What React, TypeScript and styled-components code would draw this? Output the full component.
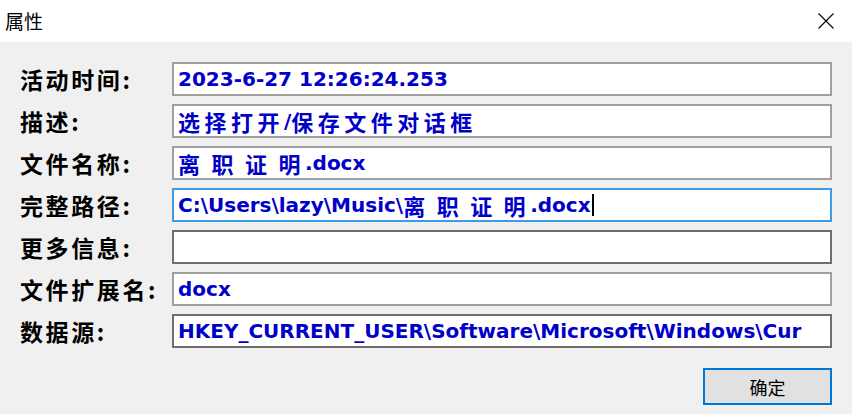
import React from 'react';
import styled, { createGlobalStyle } from 'styled-components';

const GlobalStyle = createGlobalStyle`
  html, body {
    margin: 0;
    padding: 0;
    background: #f0f0f0;
  }
  * {
    box-sizing: border-box;
  }
`;

const Dialog = styled.div`
  width: 852px;
  height: 414px;
  display: flex;
  flex-direction: column;
  background: #f0f0f0;
  font-family: "Noto Sans CJK SC", "DejaVu Sans", sans-serif;
  overflow: hidden;
`;

const TitleBar = styled.div`
  height: 42px;
  background: #ffffff;
  display: flex;
  align-items: center;
  justify-content: space-between;
  padding: 0 18px 0 5px;
`;

const Title = styled.div`
  font-size: 19px;
  color: #000;
  line-height: 1;
  margin-top: -2px;
`;

const CloseButton = styled.div`
  width: 16px;
  height: 16px;
  display: flex;
  margin-top: -1px;
`;

const Body = styled.div`
  flex: 1;
  display: flex;
  flex-direction: column;
  padding: 20px 20px 0 20px;
`;

const Rows = styled.div`
  display: flex;
  flex-direction: column;
  gap: 8px;
`;

const Row = styled.div`
  display: grid;
  grid-template-columns: 152px 1fr;
  align-items: center;
  height: 34px;
`;

const Label = styled.div`
  font-family: "Noto Sans CJK SC", sans-serif;
  font-weight: 700;
  font-size: 23px;
  letter-spacing: 2.6px;
  color: #000;
  white-space: nowrap;
  line-height: 1;
`;

const Field = styled.div<{ $focused?: boolean; $dark?: boolean }>`
  height: 34px;
  background: #ffffff;
  border: 2px solid ${p => (p.$focused ? '#3d9be9' : p.$dark ? '#6e6e6e' : '#a0a0a0')};
  padding: 0 0 0 4px;
  display: flex;
  align-items: center;
  overflow: hidden;
  white-space: nowrap;
  color: #0000c8;
  font-family: "DejaVu Sans", sans-serif;
  font-weight: 700;
  font-size: 20px;
  line-height: 1;
`;

const Han = styled.span`
  font-family: "Noto Sans CJK SC", sans-serif;
  font-weight: 700;
  font-size: 22px;
  letter-spacing: 4.5px;
`;

const Latin = styled.span`
  white-space: pre;
`;

const Caret = styled.span`
  display: inline-block;
  width: 2px;
  height: 22px;
  background: #000;
  margin-left: 1px;
`;

const Footer = styled.div`
  display: flex;
  justify-content: flex-end;
  padding-top: 20px;
`;

const OkButton = styled.div`
  width: 129px;
  height: 37px;
  background: #e1e1e1;
  border: 2px solid #0078d7;
  display: flex;
  align-items: center;
  justify-content: center;
  font-family: "Noto Sans CJK SC", sans-serif;
  font-size: 18px;
  color: #000;
`;

const splitRuns = (text: string) => {
  const runs: { han: boolean; text: string }[] = [];
  for (const ch of text) {
    const han = /[\u3400-\u9fff]/.test(ch);
    const last = runs[runs.length - 1];
    if (last && last.han === han) last.text += ch;
    else runs.push({ han, text: ch });
  }
  return runs;
};

const Value: React.FC<{ text: string }> = ({ text }) => (
  <>
    {splitRuns(text).map((r, i) =>
      r.han ? <Han key={i}>{r.text}</Han> : <Latin key={i}>{r.text}</Latin>
    )}
  </>
);

const fields = [
  { label: '活动时间:', value: '2023-6-27 12:26:24.253' },
  { label: '描述:', value: '选择打开/保存文件对话框' },
  { label: '文件名称:', value: '离 职 证 明.docx' },
  { label: '完整路径:', value: 'C:\\Users\\lazy\\Music\\离 职 证 明.docx', focused: true },
  { label: '更多信息:', value: '', dark: true },
  { label: '文件扩展名:', value: 'docx' },
  { label: '数据源:', value: 'HKEY_CURRENT_USER\\Software\\Microsoft\\Windows\\Cur', dark: true },
];

export default function App() {
  return (
    <Dialog>
      <GlobalStyle />
      <TitleBar>
        <Title>属性</Title>
        <CloseButton>
          <svg width="16" height="16" viewBox="0 0 16 16">
            <path d="M0.5 0.5 L15.5 15.5 M15.5 0.5 L0.5 15.5" stroke="#000" strokeWidth="1.1" fill="none" />
          </svg>
        </CloseButton>
      </TitleBar>
      <Body>
        <Rows>
          {fields.map(f => (
            <Row key={f.label}>
              <Label>{f.label}</Label>
              <Field $focused={f.focused} $dark={f.dark}>
                <Value text={f.value} />
                {f.focused && <Caret />}
              </Field>
            </Row>
          ))}
        </Rows>
        <Footer>
          <OkButton>确定</OkButton>
        </Footer>
      </Body>
    </Dialog>
  );
}
